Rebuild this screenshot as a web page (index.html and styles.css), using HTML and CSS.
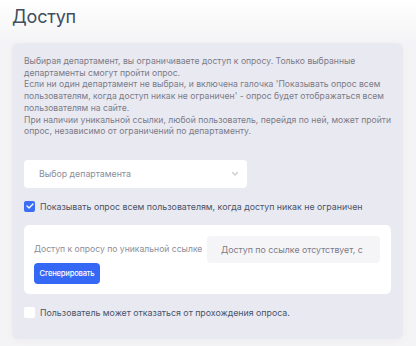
FILE: index.html
```html
<!DOCTYPE html>
<html lang="ru">
<head>
    <meta charset="UTF-8">
    <meta name="viewport" content="width=device-width, initial-scale=1.0">
    <title>Доступ</title>
    <link rel="stylesheet" href="styles.css">
</head>
<body>
    <h1>Доступ</h1>

    <div class="panel">
        <p class="hint">
            Выбирая департамент, вы ограничиваете доступ к опросу. Только выбранные департаменты смогут пройти опрос.<br>
            Если ни один департамент не выбран, и включена галочка 'Показывать опрос всем пользователям, когда доступ никак не ограничен' - опрос будет отображаться всем пользователям на сайте.<br>
            При наличии уникальной ссылки, любой пользователь, перейдя по ней, может пройти опрос, независимо от ограничений по департаменту.
        </p>

        <div class="select">
            <span>Выбор департамента</span>
            <svg class="chevron" width="8" height="6" viewBox="0 0 8 6">
                <path d="M1.5 1.5 L4 4 L6.5 1.5" fill="none" stroke="#cfcfd6" stroke-width="1.5" stroke-linecap="round" stroke-linejoin="round"/>
            </svg>
        </div>

        <label class="check-row">
            <span class="box checked">
                <svg width="8" height="6" viewBox="0 0 8 6">
                    <path d="M1 3 L3 5 L7 1" fill="none" stroke="#fff" stroke-width="1.3" stroke-linecap="round" stroke-linejoin="round"/>
                </svg>
            </span>
            Показывать опрос всем пользователям, когда доступ никак не ограничен
        </label>

        <div class="link-card">
            <span class="link-label">Доступ к опросу по уникальной ссылке</span>
            <div class="link-input">Доступ по ссылке отсутствует, с</div>
            <button type="button">Сгенерировать</button>
        </div>

        <label class="check-row last">
            <span class="box"></span>
            Пользователь может отказаться от прохождения опроса.
        </label>
    </div>
</body>
</html>
```

FILE: styles.css
```css
body {
    font-family: Inter, "Noto Sans", sans-serif;
    background: linear-gradient(#ffffff 0, #f4f4f6 42px);
    margin: 0;
    padding: 0 13px 0 12px;
    height: 346px;
    overflow: hidden;
}

h1 {
    font-size: 18px;
    font-weight: 400;
    color: #414d61;
    margin: 0;
    padding-top: 6px;
    height: 37px;
    letter-spacing: -0.2px;
}

.panel {
    background-color: #e9e9f1;
    border-radius: 6px;
    padding: 13px 12px 21px 12px;
    box-shadow: 0 2px 10px rgba(0, 0, 0, 0.03);
}

.hint {
    font-size: 8.6px;
    line-height: 11.7px;
    color: #7b7b88;
    margin: 0 0 22px 0;
}

.select {
    width: 223px;
    height: 28px;
    box-sizing: border-box;
    background-color: #fff;
    border-radius: 4px;
    display: flex;
    align-items: center;
    justify-content: space-between;
    padding: 0 8px 0 15px;
    font-size: 8.8px;
    color: #8d8d98;
}

.check-row {
    display: flex;
    align-items: center;
    gap: 5px;
    font-size: 8.8px;
    color: #4a5468;
    margin-top: 13px;
}

.check-row.last {
    margin-top: 13px;
}

.box {
    width: 11px;
    height: 11px;
    border-radius: 2px;
    background-color: #fff;
    display: flex;
    align-items: center;
    justify-content: center;
}

.box.checked {
    background-color: #3b6ef4;
}

.link-card {
    background-color: #fff;
    border-radius: 5px;
    margin-top: 13px;
    padding: 11px 10px 10px 10px;
    display: flex;
    flex-wrap: wrap;
    align-items: center;
}

.link-label {
    font-size: 8.6px;
    color: #8d8d98;
    width: 173px;
}

.link-input {
    width: 173px;
    height: 27px;
    box-sizing: border-box;
    background-color: #f5f5f8;
    border-radius: 4px;
    padding: 0 14px;
    font-size: 8.8px;
    color: #7b7b88;
    line-height: 27px;
    white-space: nowrap;
    overflow: hidden;
}

button {
    background-color: #3568f5;
    color: #fff;
    border: none;
    border-radius: 4px;
    font-family: inherit;
    font-size: 7.6px;
    font-weight: 500;
    height: 21px;
    width: 66px;
    padding: 0;
    letter-spacing: -0.2px;
}
```
